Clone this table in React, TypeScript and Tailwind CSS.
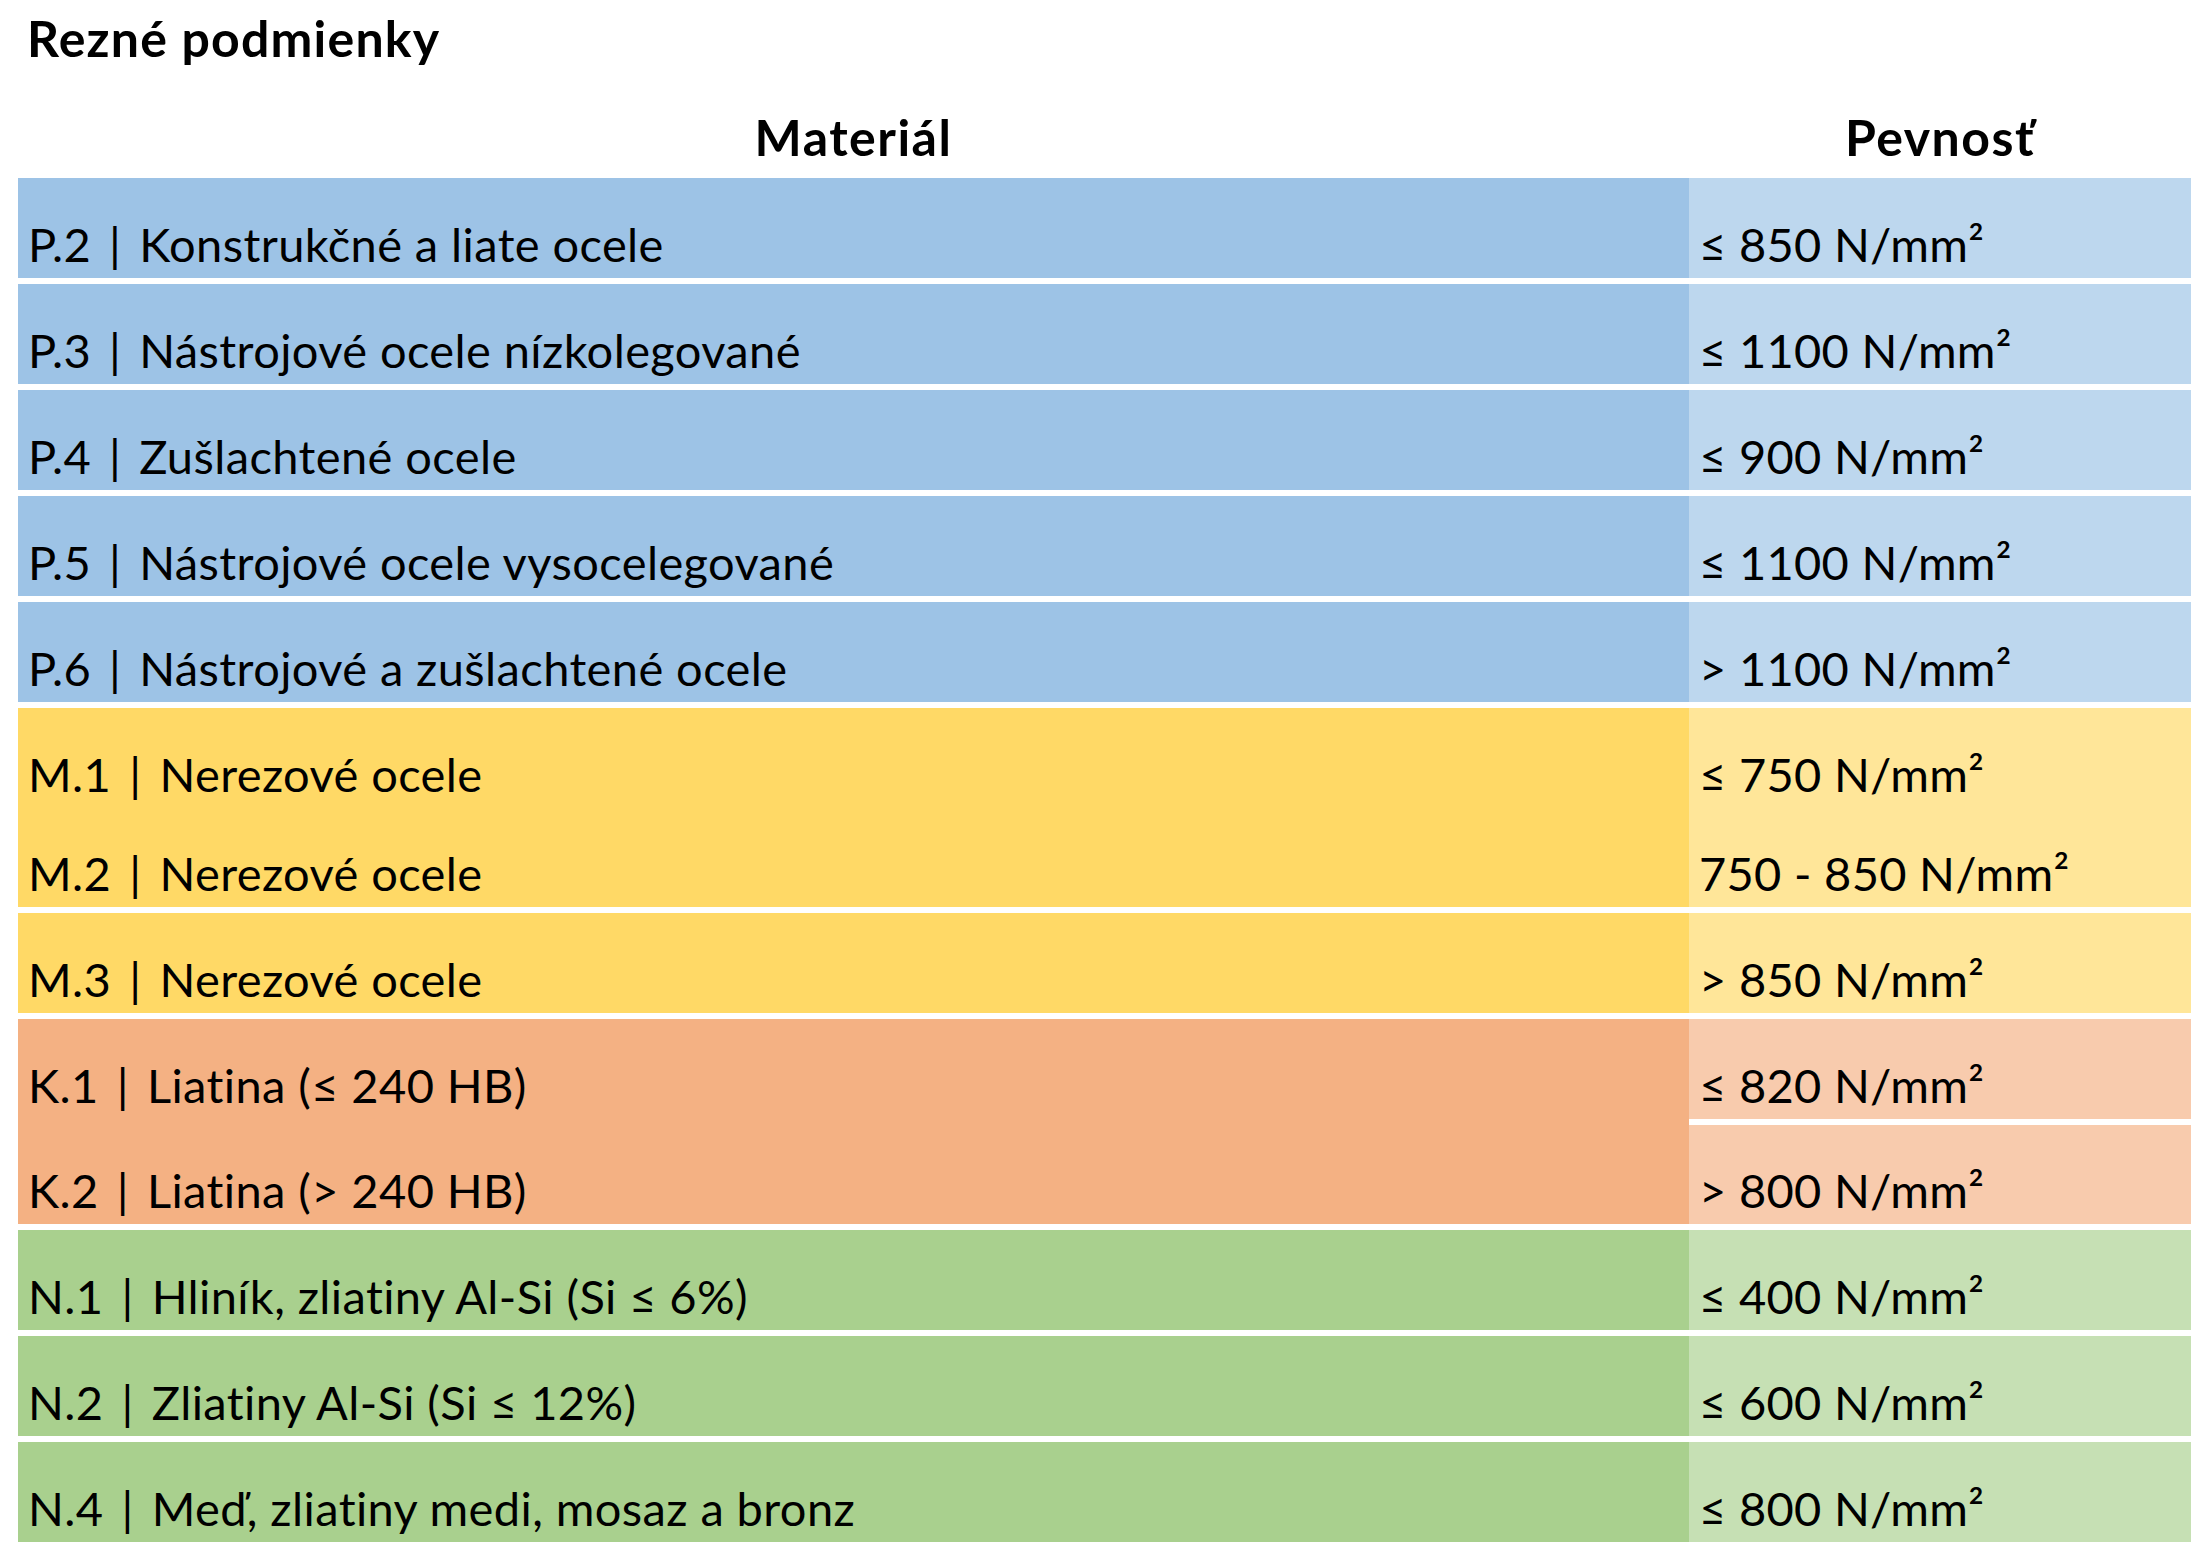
import React from "react";

type Line = { text: string; h: string };

const FONT = "font-['Lato',_'Liberation_Sans',_sans-serif]";

function LineText({ text }: { text: string }) {
  const idx = text.indexOf(" | ");
  if (idx < 0) {
    return <span className="text-[47px] leading-none tracking-[0.3px] text-black whitespace-nowrap">{text}</span>;
  }
  const code = text.slice(0, idx);
  const rest = text.slice(idx + 3);
  return (
    <span className="text-[47px] leading-none tracking-[0.4px] text-black whitespace-nowrap">
      {code}
      <span className="mx-[18px]">|</span>
      {rest}
    </span>
  );
}

function Cell({ lines, bg, extra = "" }: { lines: Line[]; bg: string; extra?: string }) {
  return (
    <div className={`${bg} ${extra} flex flex-col`}>
      {lines.map((l, i) => (
        <div key={i} className={`${l.h} flex items-end pl-[10px] pb-[10px]`}>
          <LineText text={l.text} />
        </div>
      ))}
    </div>
  );
}

type Group = {
  left: Line[];
  right: Line[][];
  lbg: string;
  rbg: string;
};

const groups: Group[] = [
  {
    left: [{ text: "P.2 | Konstrukčné a liate ocele", h: "h-[100px]" }],
    right: [[{ text: "≤ 850 N/mm²", h: "h-[100px]" }]],
    lbg: "bg-[#9DC3E6]",
    rbg: "bg-[#BDD7EE]",
  },
  {
    left: [{ text: "P.3 | Nástrojové ocele nízkolegované", h: "h-[100px]" }],
    right: [[{ text: "≤ 1100 N/mm²", h: "h-[100px]" }]],
    lbg: "bg-[#9DC3E6]",
    rbg: "bg-[#BDD7EE]",
  },
  {
    left: [{ text: "P.4 | Zušlachtené ocele", h: "h-[100px]" }],
    right: [[{ text: "≤ 900 N/mm²", h: "h-[100px]" }]],
    lbg: "bg-[#9DC3E6]",
    rbg: "bg-[#BDD7EE]",
  },
  {
    left: [{ text: "P.5 | Nástrojové ocele vysocelegované", h: "h-[100px]" }],
    right: [[{ text: "≤ 1100 N/mm²", h: "h-[100px]" }]],
    lbg: "bg-[#9DC3E6]",
    rbg: "bg-[#BDD7EE]",
  },
  {
    left: [{ text: "P.6 | Nástrojové a zušlachtené ocele", h: "h-[100px]" }],
    right: [[{ text: "> 1100 N/mm²", h: "h-[100px]" }]],
    lbg: "bg-[#9DC3E6]",
    rbg: "bg-[#BDD7EE]",
  },
  {
    left: [
      { text: "M.1 | Nerezové ocele", h: "h-[100px]" },
      { text: "M.2 | Nerezové ocele", h: "h-[99px]" },
    ],
    right: [
      [
        { text: "≤ 750 N/mm²", h: "h-[100px]" },
        { text: "750 - 850 N/mm²", h: "h-[99px]" },
      ],
    ],
    lbg: "bg-[#FFD966]",
    rbg: "bg-[#FFE699]",
  },
  {
    left: [{ text: "M.3 | Nerezové ocele", h: "h-[100px]" }],
    right: [[{ text: "> 850 N/mm²", h: "h-[100px]" }]],
    lbg: "bg-[#FFD966]",
    rbg: "bg-[#FFE699]",
  },
  {
    left: [
      { text: "K.1 | Liatina (≤ 240 HB)", h: "h-[100px]" },
      { text: "K.2 | Liatina (> 240 HB)", h: "h-[105px]" },
    ],
    right: [
      [{ text: "≤ 820 N/mm²", h: "h-[100px]" }],
      [{ text: "> 800 N/mm²", h: "h-[99px]" }],
    ],
    lbg: "bg-[#F4B183]",
    rbg: "bg-[#F8CBAD]",
  },
  {
    left: [{ text: "N.1 | Hliník, zliatiny Al-Si (Si ≤ 6%)", h: "h-[100px]" }],
    right: [[{ text: "≤ 400 N/mm²", h: "h-[100px]" }]],
    lbg: "bg-[#A9D08E]",
    rbg: "bg-[#C6E0B4]",
  },
  {
    left: [{ text: "N.2 | Zliatiny Al-Si (Si ≤ 12%)", h: "h-[100px]" }],
    right: [[{ text: "≤ 600 N/mm²", h: "h-[100px]" }]],
    lbg: "bg-[#A9D08E]",
    rbg: "bg-[#C6E0B4]",
  },
  {
    left: [{ text: "N.4 | Meď, zliatiny medi, mosaz a bronz", h: "h-[100px]" }],
    right: [[{ text: "≤ 800 N/mm²", h: "h-[100px]" }]],
    lbg: "bg-[#A9D08E]",
    rbg: "bg-[#C6E0B4]",
  },
];

export default function App() {
  return (
    <div className={`${FONT} bg-white w-[2209px] min-h-[1555px] px-[18px] pt-[13px] text-black`}>
      <h1 className="ml-[9px] text-[50px] leading-none font-bold tracking-[1.2px]">Rezné podmienky</h1>
      <div className="flex mt-[49px] mb-[16px]">
        <div className="w-[1671px] text-center text-[50px] leading-none font-bold tracking-[1.5px]">Materiál</div>
        <div className="flex-1 text-center text-[50px] leading-none font-bold tracking-[1.5px]">Pevnosť</div>
      </div>
      <div className="flex flex-col gap-[6px]">
        {groups.map((g, i) => (
          <div key={i} className="flex">
            <Cell lines={g.left} bg={g.lbg} extra="w-[1671px]" />
            <div className="flex-1 flex flex-col gap-[6px]">
              {g.right.map((r, j) => (
                <Cell key={j} lines={r} bg={g.rbg} />
              ))}
            </div>
          </div>
        ))}
      </div>
    </div>
  );
}
